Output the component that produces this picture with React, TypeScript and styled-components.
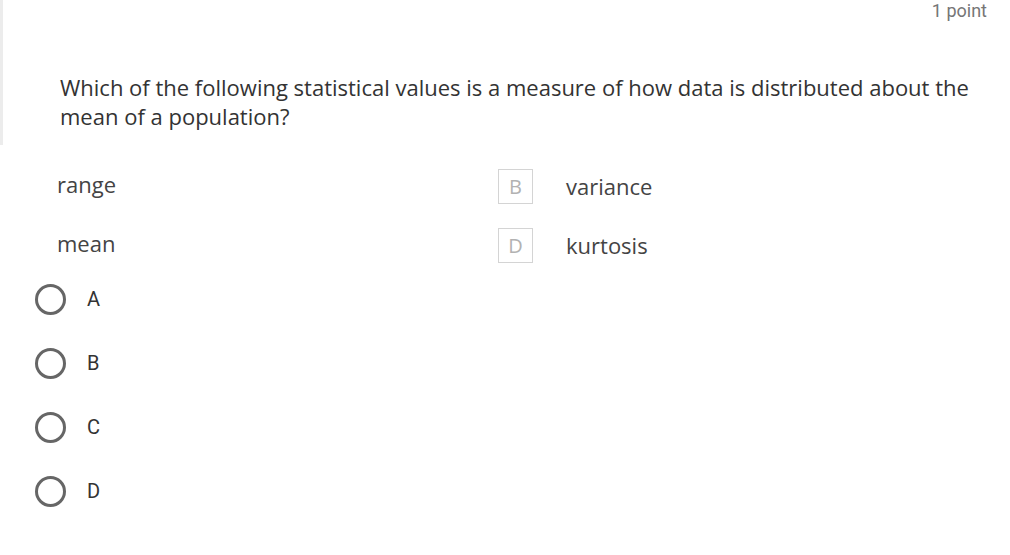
import React from "react";
import styled, { createGlobalStyle } from "styled-components";

const GlobalStyle = createGlobalStyle`
  html, body {
    margin: 0;
    padding: 0;
    background: #ffffff;
  }
`;

const Page = styled.div`
  width: 1010px;
  height: 555px;
  overflow: hidden;
  background: #ffffff;
`;

const TopBlock = styled.div`
  border-left: 3px solid #ececec;
  padding: 1px 23px 14px 57px;
`;

const Points = styled.div`
  text-align: right;
  font-family: Roboto, "Liberation Sans", sans-serif;
  font-size: 18px;
  line-height: 20px;
  color: #767676;
`;

const Question = styled.div`
  margin-top: 52px;
  font-family: "Open Sans", "Liberation Sans", sans-serif;
  font-size: 22px;
  line-height: 29px;
  color: #333333;
`;

const OptionsGrid = styled.div`
  display: grid;
  grid-template-columns: 441px auto;
  row-gap: 19px;
  margin: 19px 0 0 57px;
`;

const OptionCell = styled.div<{ $shift?: number }>`
  display: flex;
  align-items: center;
  height: 40px;
  transform: translateY(${(p) => p.$shift ?? 0}px);
`;

const LetterBox = styled.span`
  display: flex;
  align-items: center;
  justify-content: center;
  box-sizing: border-box;
  width: 35px;
  height: 35px;
  margin-right: 33px;
  border: 1px solid #d4d4d4;
  font-family: "Open Sans", "Liberation Sans", sans-serif;
  font-size: 20px;
  color: #b2b2b2;
`;

const OptionText = styled.span`
  font-family: "Open Sans", "Liberation Sans", sans-serif;
  font-size: 22px;
  color: #444444;
`;

const RadioList = styled.div`
  display: flex;
  flex-direction: column;
  gap: 24px;
  margin: 16px 0 0 35px;
`;

const RadioRow = styled.label`
  display: flex;
  align-items: center;
  gap: 21px;
  height: 40px;
`;

const RadioCircle = styled.span`
  box-sizing: border-box;
  width: 31px;
  height: 31px;
  border: 3.5px solid #666666;
  border-radius: 50%;
`;

const RadioLabel = styled.span`
  font-family: Roboto, "Liberation Sans", sans-serif;
  font-size: 20px;
  color: #333333;
`;

const options = [
  { letter: "A", text: "range" },
  { letter: "B", text: "variance" },
  { letter: "C", text: "mean" },
  { letter: "D", text: "kurtosis" },
];

export default function App() {
  return (
    <Page>
      <GlobalStyle />
      <TopBlock>
        <Points>1 point</Points>
        <Question>
          Which of the following statistical values is a measure of how data is
          distributed about the mean of a population?
        </Question>
      </TopBlock>
      <OptionsGrid>
        {options.map((o, i) =>
          i % 2 === 0 ? (
            <OptionCell key={o.letter}>
              <OptionText>{o.text}</OptionText>
            </OptionCell>
          ) : (
            <OptionCell key={o.letter} $shift={2}>
              <LetterBox>{o.letter}</LetterBox>
              <OptionText>{o.text}</OptionText>
            </OptionCell>
          )
        )}
      </OptionsGrid>
      <RadioList>
        {options.map((o) => (
          <RadioRow key={o.letter}>
            <RadioCircle />
            <RadioLabel>{o.letter}</RadioLabel>
          </RadioRow>
        ))}
      </RadioList>
    </Page>
  );
}
